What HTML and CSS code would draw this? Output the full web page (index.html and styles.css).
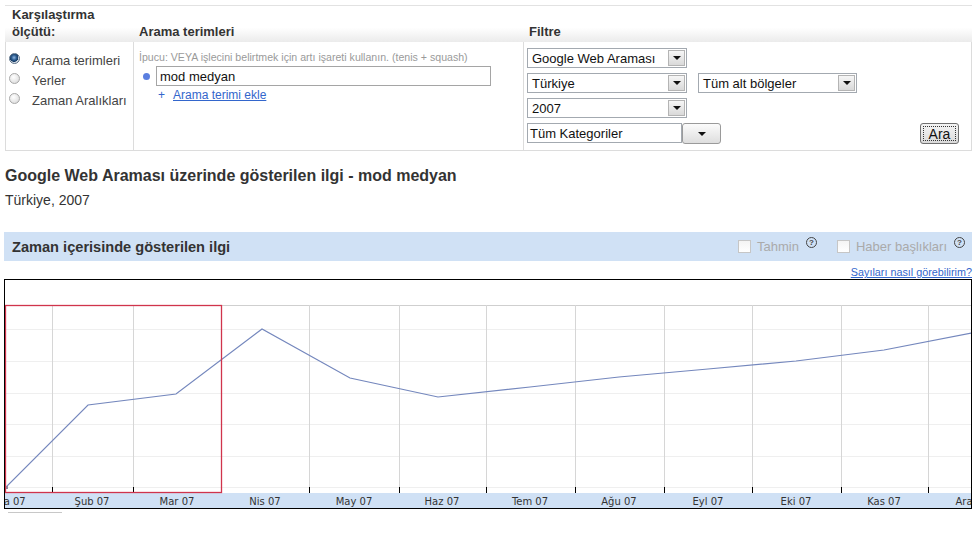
FILE: index.html
```html
<!DOCTYPE html>
<html lang="tr">
<head>
<meta charset="utf-8">
<title>Google Trends</title>
<link rel="stylesheet" href="styles.css">
</head>
<body>
<div class="panel">
  <div class="hd hd1">Karşılaştırma<br>ölçütü:</div>
  <div class="hd hd2">Arama terimleri</div>
  <div class="hd hd3">Filtre</div>

  <div class="cell c1">
    <div class="radio-row"><span class="radio on"></span>Arama terimleri</div>
    <div class="radio-row"><span class="radio"></span>Yerler</div>
    <div class="radio-row"><span class="radio"></span>Zaman Aralıkları</div>
  </div>
  <div class="cell c2">
    <div class="hint">İpucu: VEYA işlecini belirtmek için artı işareti kullanın. (tenis + squash)</div>
    <div class="term-row"><span class="dot"></span><div class="textbox">mod medyan</div></div>
    <div class="add-row"><span class="plus">+</span><a class="link" href="#">Arama terimi ekle</a></div>
  </div>
  <div class="cell c3">
    <div class="frow"><div class="sel w160"><span class="sel-text">Google Web Araması</span><span class="arrow"></span></div></div>
    <div class="frow"><div class="sel w160"><span class="sel-text">Türkiye</span><span class="arrow"></span></div><div class="sel w159"><span class="sel-text">Tüm alt bölgeler</span><span class="arrow"></span></div></div>
    <div class="frow"><div class="sel w160"><span class="sel-text">2007</span><span class="arrow"></span></div></div>
    <div class="frow last">
      <div class="combo"><div class="combo-text">Tüm Kategoriler</div><div class="combo-btn"><span class="tri"></span></div></div>
      <div class="btn-ara"><span class="focus">Ara</span></div>
    </div>
  </div>
</div>

<h1 class="title">Google Web Araması üzerinde gösterilen ilgi - mod medyan</h1>
<div class="subtitle">Türkiye, 2007</div>

<div class="bar">
  <div class="bar-title">Zaman içerisinde gösterilen ilgi</div>
  <div class="bar-opts">
    <span class="cb"></span><span class="opt">Tahmin</span><span class="help">?</span>
    <span class="cb second"></span><span class="opt">Haber başlıkları</span><span class="help">?</span>
  </div>
</div>
<div class="howto"><a class="small-link" href="#">Sayıları nasıl görebilirim?</a></div>

<div class="chart">
  <svg width="966" height="228" viewBox="0 0 966 228" xmlns="http://www.w3.org/2000/svg">
    <g stroke="#efefef" stroke-width="1">
      <line x1="0" y1="49.5" x2="966" y2="49.5"/>
      <line x1="0" y1="81.5" x2="966" y2="81.5"/>
      <line x1="0" y1="113.5" x2="966" y2="113.5"/>
      <line x1="0" y1="144.5" x2="966" y2="144.5"/>
      <line x1="0" y1="176.5" x2="966" y2="176.5"/>
      <line x1="0" y1="207.5" x2="966" y2="207.5"/>
    </g>
    <line x1="0" y1="25.5" x2="966" y2="25.5" stroke="#cfcfcf"/>
    <g stroke="#d6d6d6" stroke-width="1">
      <line x1="47.5" y1="25" x2="47.5" y2="212"/>
      <line x1="128.5" y1="25" x2="128.5" y2="212"/>
      <line x1="216.5" y1="25" x2="216.5" y2="212"/>
      <line x1="304.5" y1="25" x2="304.5" y2="212"/>
      <line x1="394.5" y1="25" x2="394.5" y2="212"/>
      <line x1="481.5" y1="25" x2="481.5" y2="212"/>
      <line x1="570.5" y1="25" x2="570.5" y2="212"/>
      <line x1="659.5" y1="25" x2="659.5" y2="212"/>
      <line x1="747.5" y1="25" x2="747.5" y2="212"/>
      <line x1="836.5" y1="25" x2="836.5" y2="212"/>
      <line x1="923.5" y1="25" x2="923.5" y2="212"/>
    </g>
    <g stroke="#000" stroke-width="1">
      <line x1="47.5" y1="207" x2="47.5" y2="213"/>
      <line x1="128.5" y1="207" x2="128.5" y2="213"/>
      <line x1="304.5" y1="207" x2="304.5" y2="213"/>
      <line x1="394.5" y1="207" x2="394.5" y2="213"/>
      <line x1="481.5" y1="207" x2="481.5" y2="213"/>
      <line x1="570.5" y1="207" x2="570.5" y2="213"/>
      <line x1="659.5" y1="207" x2="659.5" y2="213"/>
      <line x1="747.5" y1="207" x2="747.5" y2="213"/>
      <line x1="836.5" y1="207" x2="836.5" y2="213"/>
      <line x1="923.5" y1="207" x2="923.5" y2="213"/>
    </g>
    <rect x="0" y="213" width="966" height="15" fill="#d0e1f5"/>
    <polyline fill="none" stroke="#7487bd" stroke-width="1.2" points="0,208 83,125 171,114 257,49 345,98 433,117 525,107 614,97 703,89 791,81 879,70 967,53"/>
    <rect x="0" y="206" width="3" height="3" fill="#8a8aa0"/>
    <rect x="0.5" y="25.5" width="216" height="187" fill="none" stroke="#d0344c" stroke-width="1.3"/>
    <g class="axis" text-anchor="middle">
      <text x="3" y="225">Oca 07</text>
      <text x="87" y="225">Şub 07</text>
      <text x="172" y="225">Mar 07</text>
      <text x="260" y="225">Nis 07</text>
      <text x="349" y="225">May 07</text>
      <text x="437" y="225">Haz 07</text>
      <text x="525" y="225">Tem 07</text>
      <text x="614" y="225">Ağu 07</text>
      <text x="703" y="225">Eyl 07</text>
      <text x="791" y="225">Eki 07</text>
      <text x="879" y="225">Kas 07</text>
      <text x="967" y="225">Ara 07</text>
    </g>
  </svg>
</div>
<div class="under"></div>
</body>
</html>
```

FILE: styles.css
```css
* { box-sizing: border-box; }
body {
  margin: 0;
  font-family: "Liberation Sans", Arial, sans-serif;
  color: #333;
  background: #fff;
}
a { color: #3366cc; }

.panel {
  margin: 5px 0 0 5px;
  width: 967px;
  border-top: 1px solid #e2e2e2;
  display: grid;
  grid-template-columns: 128px 390px 1fr;
  grid-template-rows: 36px 109px;
}
.hd {
  background: linear-gradient(to bottom, #fff 0%, #fff 60%, #ebebeb 100%);
  font-size: 13px;
  font-weight: bold;
  line-height: 17px;
  color: #333;
  display: flex;
  align-items: flex-end;
  padding-bottom: 2px;
}
.hd1 { padding: 0 0 2px 7px; align-items: flex-start; }
.hd2 { padding-left: 6px; }
.hd3 { padding-left: 6px; }

.cell {
  border-left: 1px solid #dcdcdc;
  border-bottom: 1px solid #dcdcdc;
}
.c3 { border-right: 1px solid #dcdcdc; }

.c1 { padding: 8px 0 0 3px; }
.radio-row {
  height: 20px;
  display: flex;
  align-items: center;
  font-size: 13px;
  color: #444;
}
.radio {
  width: 11px;
  height: 11px;
  border-radius: 50%;
  border: 1px solid #a8a8a8;
  background: radial-gradient(circle at 40% 35%, #fff 0%, #e6e6e6 60%, #cfcfcf 100%);
  margin-right: 12px;
  flex: none;
  position: relative;
  top: -2px;
}
.radio.on {
  border-color: #5a6f86;
  background: radial-gradient(circle at 45% 40%, #8fb6e0 0%, #2a5a8e 35%, #163a63 55%, #c9d3de 60%, #eef2f6 100%);
}

.c2 { padding: 8px 0 0 5px; }
.hint {
  font-size: 10.6px;
  line-height: 14px;
  color: #9a9a9a;
}
.term-row {
  display: flex;
  align-items: center;
  margin-top: 2px;
}
.dot {
  width: 7px;
  height: 7px;
  border-radius: 50%;
  background: #5b7fe0;
  margin-left: 4px;
  margin-right: 6px;
}
.textbox {
  width: 335px;
  height: 20px;
  border: 1px solid #a5a5a5;
  font-size: 13px;
  line-height: 19px;
  padding-left: 3px;
  color: #111;
}
.add-row {
  margin-top: 1px;
  height: 16px;
  font-size: 12px;
  line-height: 16px;
  display: flex;
  padding-left: 19px;
}
.plus { color: #3366cc; width: 15px; }
.link { color: #3366cc; text-decoration: underline; }

.c3 { padding: 6px 12px 0 3px; }
.frow {
  display: flex;
  gap: 11px;
  height: 20px;
  margin-bottom: 5px;
}
.frow.last {
  height: 21px;
  margin-top: 1px;
  gap: 0;
  justify-content: space-between;
}
.sel {
  height: 20px;
  border: 1px solid #a3a9b0;
  display: flex;
  align-items: center;
  justify-content: space-between;
  padding: 0 1px 0 4px;
  font-size: 13px;
  color: #111;
  background: #fff;
}
.w160 { width: 160px; }
.w159 { width: 159px; }
.arrow {
  width: 17px;
  height: 16px;
  border: 1px solid #b4b4b4;
  background: linear-gradient(#f6f6f6, #d9d9d9);
  position: relative;
}
.arrow::after, .tri {
  content: "";
  position: absolute;
  left: 50%;
  top: 50%;
  margin: -2px 0 0 -4px;
  border-left: 4px solid transparent;
  border-right: 4px solid transparent;
  border-top: 4px solid #111;
}
.combo { display: flex; }
.combo-text {
  width: 155px;
  height: 20px;
  border: 1px solid #a3a9b0;
  font-size: 13px;
  line-height: 20px;
  padding-left: 2px;
  color: #111;
}
.combo-btn {
  width: 39px;
  height: 21px;
  border: 1px solid #9a9a9a;
  border-radius: 3px;
  background: linear-gradient(#fbfbfb, #dedede);
  position: relative;
}
.btn-ara {
  width: 39px;
  height: 21px;
  border: 1px solid #707070;
  border-radius: 3px;
  background: linear-gradient(#f4f4f4 0%, #e8e8e8 50%, #d9d9d9 100%);
  padding: 2px;
}
.btn-ara .focus {
  display: block;
  height: 15px;
  border: 1px dotted #333;
  font-size: 14px;
  line-height: 15px;
  text-align: center;
  color: #111;
}

.title {
  margin: 15px 0 0 5px;
  font-size: 16px;
  line-height: 20px;
  font-weight: bold;
  color: #333;
}
.subtitle {
  margin: 4px 0 0 5px;
  font-size: 14px;
  line-height: 20px;
  color: #333;
}

.bar {
  margin: 22px 0 0 4px;
  width: 968px;
  height: 29px;
  background: #d0e1f5;
  display: flex;
  align-items: center;
  justify-content: space-between;
  padding: 0 7px 0 8px;
}
.bar-title {
  font-size: 14.6px;
  font-weight: bold;
  color: #333;
}
.bar-opts {
  display: flex;
  align-items: center;
  font-size: 13px;
  color: #aaa;
}
.cb {
  width: 13px;
  height: 13px;
  border: 1px solid #c6c6c6;
  background: linear-gradient(#f4f4f4, #fff);
  margin-right: 6px;
}
.cb.second { margin-left: 20px; }
.opt { margin-right: 7px; }
.help {
  width: 11px;
  height: 11px;
  border: 1px solid #444;
  border-radius: 50%;
  font-size: 8px;
  font-weight: bold;
  line-height: 9px;
  text-align: center;
  color: #444;
  position: relative;
  top: -4px;
}

.howto {
  margin: 5px 0 0 4px;
  width: 968px;
  text-align: right;
  font-size: 10.8px;
  line-height: 13px;
}
.small-link { color: #3366cc; text-decoration: underline; }

.chart {
  margin: 0 0 0 4px;
  width: 968px;
  height: 230px;
  border: 1px solid #000;
  overflow: hidden;
}
.chart svg { display: block; }
.axis text {
  font-family: "DejaVu Sans", Verdana, sans-serif;
  font-size: 10px;
  fill: #333;
}
.under {
  margin: 3px 0 0 8px;
  width: 54px;
  height: 1px;
  background: #c8c8c8;
}
```
